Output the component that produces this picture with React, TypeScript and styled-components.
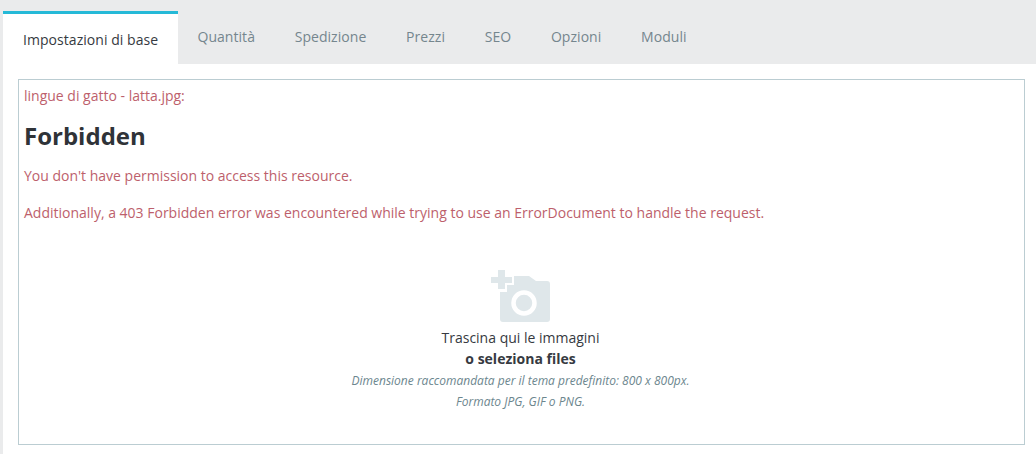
import React from "react"
import styled, { createGlobalStyle } from "styled-components"

const GlobalStyle = createGlobalStyle`
  html, body {
    margin: 0;
    padding: 0;
    background: #ffffff;
  }
  body {
    font-family: "Open Sans", "Liberation Sans", sans-serif;
    font-size: 14px;
    color: #363a41;
  }
`

const Page = styled("div")`
  width: 1036px;
  height: 454px;
  overflow: hidden;
  background: #ffffff;
  border-left: 3px solid #eaebec;
  box-sizing: border-box;
`

const TabBar = styled("ul")`
  display: flex;
  margin: 0;
  padding: 11px 0 0;
  height: 64px;
  box-sizing: border-box;
  list-style: none;
  background: #eaebec;
`

const Tab = styled("li")<{ $active?: boolean }>`
  padding: ${({ $active }) => ($active ? "16px 19.4px 0 20px" : "16px 19.85px 0")};
  border-top: 3px solid ${({ $active }) => ($active ? "#25b9d7" : "transparent")};
  background: ${({ $active }) => ($active ? "#ffffff" : "transparent")};
  color: ${({ $active }) => ($active ? "#363a41" : "#75868e")};
  letter-spacing: 0.05px;
  line-height: 20px;
  white-space: nowrap;
  position: relative;
  top: ${({ $active }) => ($active ? "0" : "-3px")};
`

const Content = styled("div")`
  padding: 15px 11px 0 15px;
`

const Dropzone = styled("div")`
  height: 366px;
  box-sizing: border-box;
  border: 1px solid #bbcdd2;
  padding: 6px 5px 0;
`

const ErrorText = styled("div")`
  color: #bd5f6c;
  line-height: 20px;
`

const Heading = styled("h1")`
  margin: 17px 0 1px;
  font-size: 24px;
  line-height: 25px;
  font-weight: 700;
  color: #2f3338;
`

const ErrorParagraph = styled("p")`
  margin: 0;
  padding-top: 17px;
  color: #bd5f6c;
  line-height: 20px;
`

const Hint = styled("div")`
  display: flex;
  flex-direction: column;
  align-items: center;
  margin-top: 47px;
  padding-right: 2px;
  text-align: center;
`

const CameraIcon = styled("svg")`
  display: block;
  width: 60px;
  height: 52px;
`

const HintTitle = styled("div")`
  margin-top: 5px;
  line-height: 21px;
  color: #363a41;
`

const HintAction = styled("div")`
  font-weight: 700;
  line-height: 22px;
  color: #363a41;
`

const HintNote = styled("div")`
  font-size: 12px;
  font-style: italic;
  line-height: 21px;
  color: #6c868e;
`

const tabs = ["Quantità", "Spedizione", "Prezzi", "SEO", "Opzioni", "Moduli"]

const App: React.FC = () => {
  return (
    <Page>
      <GlobalStyle />
      <TabBar>
        <Tab $active>Impostazioni di base</Tab>
        {tabs.map((tab) => (
          <Tab key={tab}>{tab}</Tab>
        ))}
      </TabBar>
      <Content>
        <Dropzone>
          <ErrorText>lingue di gatto - latta.jpg:</ErrorText>
          <Heading>Forbidden</Heading>
          <ErrorParagraph>You don't have permission to access this resource.</ErrorParagraph>
          <ErrorParagraph>
            Additionally, a 403 Forbidden error was encountered while trying to use an ErrorDocument to handle the
            request.
          </ErrorParagraph>
          <Hint>
            <CameraIcon viewBox="0 0 60 52">
              <path
                fill="#dfe7ea"
                d="M9 22h7v-7h7V6h15l7 5h11q3 0 3 3v35q0 3-3 3H12q-3 0-3-3z"
              />
              <path fill="#dfe7ea" d="M7 0h7v7h7v6h-7v6H7v-6H0V7h7z" />
              <circle cx="33" cy="33" r="10.5" fill="none" stroke="#ffffff" strokeWidth="4.5" />
            </CameraIcon>
            <HintTitle>Trascina qui le immagini</HintTitle>
            <HintAction>o seleziona files</HintAction>
            <HintNote>Dimensione raccomandata per il tema predefinito: 800 x 800px.</HintNote>
            <HintNote>Formato JPG, GIF o PNG.</HintNote>
          </Hint>
        </Dropzone>
      </Content>
    </Page>
  )
}

export default App
